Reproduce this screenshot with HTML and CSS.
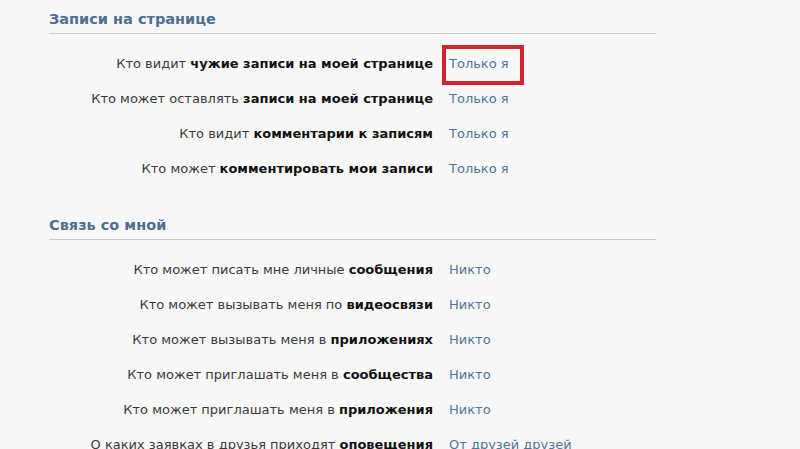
FILE: index.html
```html
<!DOCTYPE html>
<html lang="ru">
<head>
    <meta charset="UTF-8">
    <meta name="viewport" content="width=device-width, initial-scale=1.0">
    <title>Настройки приватности</title>
    <link rel="stylesheet" href="styles.css">
</head>
<body>
    <div class="settings">
        <h2 class="section-title">Записи на странице</h2>
        <div class="rows">
            <div class="row">
                <div class="label">Кто видит <b>чужие записи на моей странице</b></div>
                <div class="value"><span class="marked">Только я</span></div>
            </div>
            <div class="row">
                <div class="label">Кто может оставлять <b>записи на моей странице</b></div>
                <div class="value">Только я</div>
            </div>
            <div class="row">
                <div class="label">Кто видит <b>комментарии к записям</b></div>
                <div class="value">Только я</div>
            </div>
            <div class="row">
                <div class="label">Кто может <b>комментировать мои записи</b></div>
                <div class="value">Только я</div>
            </div>
        </div>

        <h2 class="section-title second">Связь со мной</h2>
        <div class="rows">
            <div class="row">
                <div class="label">Кто может писать мне личные <b>сообщения</b></div>
                <div class="value">Никто</div>
            </div>
            <div class="row">
                <div class="label">Кто может вызывать меня по <b>видеосвязи</b></div>
                <div class="value">Никто</div>
            </div>
            <div class="row">
                <div class="label">Кто может вызывать меня в <b>приложениях</b></div>
                <div class="value">Никто</div>
            </div>
            <div class="row">
                <div class="label">Кто может приглашать меня в <b>сообщества</b></div>
                <div class="value">Никто</div>
            </div>
            <div class="row">
                <div class="label">Кто может приглашать меня в <b>приложения</b></div>
                <div class="value">Никто</div>
            </div>
            <div class="row">
                <div class="label">О каких заявках в друзья приходят <b>оповещения</b></div>
                <div class="value">От друзей друзей</div>
            </div>
        </div>
    </div>
</body>
</html>
```

FILE: styles.css
```css
body {
    margin: 0;
    padding: 9px 0 0 0;
    background-color: #f8f8f8;
    font-family: "DejaVu Sans", Tahoma, sans-serif;
    font-size: 13px;
    color: #3a3a3a;
    overflow: hidden;
}
.settings {
    margin-left: 49px;
    width: 607px;
}
.section-title {
    margin: 0;
    font-size: 14.5px;
    font-weight: bold;
    line-height: 21px;
    color: #4d6f92;
    padding-bottom: 3px;
    border-bottom: 1px solid #c6ccd3;
}
.section-title.second {
    margin-top: 29px;
}
.rows {
    margin-top: 12px;
}
.row {
    display: flex;
    align-items: center;
    height: 35px;
}
.label {
    width: 384px;
    text-align: right;
    white-space: nowrap;
}
.label b {
    color: #111;
}
.value {
    margin-left: 16px;
    color: #4f7699;
    white-space: nowrap;
}
.marked {
    position: relative;
}
.marked::after {
    content: "";
    position: absolute;
    left: -7px;
    right: -15px;
    top: -11px;
    bottom: -14px;
    border: 4px solid #d3232e;
}
```
